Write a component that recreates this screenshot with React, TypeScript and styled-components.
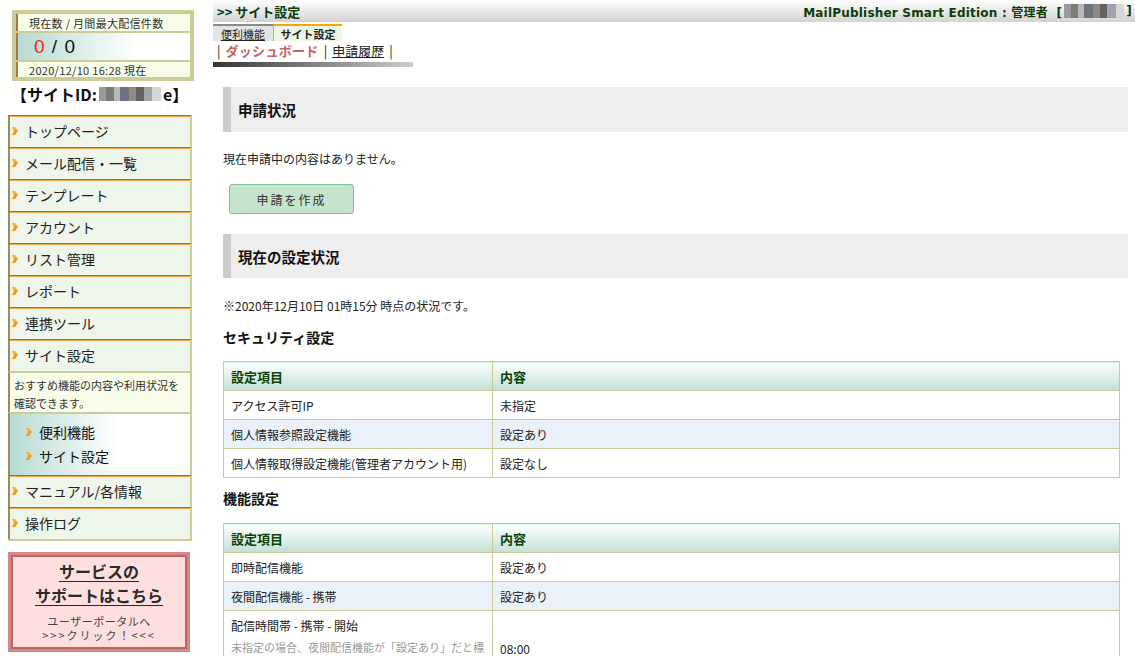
import React from 'react';
import styled, { createGlobalStyle } from 'styled-components';

const GlobalStyle = createGlobalStyle`
	html, body {
		margin: 0;
		padding: 0;
		background: #ffffff;
	}
	body {
		font-family: "Noto Sans CJK JP", "Noto Sans", "Liberation Sans", sans-serif;
		color: #222222;
	}
	* {
		box-sizing: border-box;
	}
`;

const Page = styled.div`
	display: flex;
	width: 1135px;
	height: 656px;
	overflow: hidden;
`;

/* ---------- sidebar ---------- */

const Sidebar = styled.div`
	width: 213px;
	flex: none;
	padding-left: 8px;
	padding-top: 10px;
`;

const StatusBox = styled.div`
	margin-left: 4px;
	width: 182px;
	border: 4px solid #cccc99;
	background: #cccc99;
	display: flex;
	flex-direction: column;
	gap: 2px;
`;

const StatusRow = styled.div<{ $h: number; $grad?: boolean }>`
	height: ${p => p.$h}px;
	border-left: 2px solid #a37a45;
	background: ${p => (p.$grad ? 'linear-gradient(to right, #b6dbd3, #ffffff 70%)' : '#f8fde9')};
	display: flex;
	align-items: center;
	padding-left: ${p => (p.$grad ? 16 : 11)}px;
	font-size: 11px;
	color: #333;
	letter-spacing: 0.3px;
`;

const Count = styled.span`
	font-size: 19px;
	color: #111;
	font-family: "Liberation Sans", sans-serif;
	letter-spacing: 1px;
`;

const Zero = styled.span`
	color: #ff2222;
`;

const SiteId = styled.div`
	margin: 3px 0 0 3px;
	font-size: 16px;
	font-weight: bold;
	line-height: 20px;
	display: flex;
	align-items: center;
	color: #111;
`;

const Mosaic = styled.span<{ $w: number }>`
	display: inline-block;
	width: ${p => p.$w}px;
	height: 14px;
	background: linear-gradient(
		to right,
		#9a9a9a 0 12%,
		#7d7b78 12% 24%,
		#b8b8b8 24% 34%,
		#6f7480 34% 48%,
		#8e8a86 48% 60%,
		#67625f 60% 72%,
		#a0a4ac 72% 86%,
		#d6d6d6 86% 100%
	);
	margin: 0 2px;
`;

const Nav = styled.div`
	margin-top: 11px;
	width: 184px;
	border-bottom: 2px solid #cccc99;
`;

const NavItem = styled.div`
	height: 32px;
	border-top: 1px solid #857548;
	box-shadow: inset 0 1px 0 #f3a64a;
	border-left: 2px solid #9c8a5a;
	border-right: 2px solid #cccc99;
	background: #eef5ea;
	display: flex;
	align-items: center;
	padding: 0 0 2px 2px;
	font-size: 14px;
	color: #222;
`;

const Arrow = () => (
	<svg width="6" height="8" viewBox="0 0 6 8" style={{ flex: 'none', marginRight: 7 }}>
		<polygon points="0,0 3,0 6,4 3,8 0,8 2,4" fill="#f39a1e" />
		<polygon points="0,0 3,0 5,3 2,3" fill="#f8b850" />
	</svg>
);

const NavNote = styled.div`
	border-top: 2px solid #cccc99;
	border-left: 2px solid #9c8a5a;
	border-right: 2px solid #cccc99;
	background: #f8fde9;
	font-size: 11px;
	line-height: 18px;
	padding: 3px 4px 2px;
	height: 41px;
	color: #333;
`;

const SubNav = styled.div`
	border-top: 2px solid #cccc99;
	border-left: 2px solid #9c8a5a;
	border-right: 2px solid #cccc99;
	background: linear-gradient(to right, #b6dbd3, #ffffff 60%);
	height: 63px;
	padding: 6px 0 0 16px;
`;

const SubNavItem = styled.div`
	display: flex;
	align-items: center;
	height: 24px;
	font-size: 14px;
	color: #111;
`;

const Support = styled.div`
	margin-top: 11px;
	width: 182px;
	height: 100px;
	background: #fddfe0;
	border: 3px solid #d98585;
	box-shadow: inset 0 0 0 2px #b66a6a;
	display: flex;
	flex-direction: column;
	align-items: center;
	padding-top: 4px;
	color: #333;
`;

const SupportTitle = styled.div`
	font-size: 16px;
	font-weight: bold;
	line-height: 24px;
	text-decoration: underline;
	text-underline-offset: 3px;
	color: #2a2a2a;
`;

const SupportSub = styled.div<{ $spaced?: boolean }>`
	font-size: 11px;
	line-height: 14px;
	color: #444;
	text-align: center;
	letter-spacing: ${p => (p.$spaced ? '2px' : '0.5px')};
	margin-top: ${p => (p.$spaced ? 0 : 7)}px;
`;

/* ---------- main ---------- */

const Main = styled.div`
	flex: 1;
	min-width: 0;
`;

const TopBar = styled.div`
	height: 22px;
	background: linear-gradient(to bottom, #ffffff, #d3d3d3);
	display: flex;
	align-items: center;
	justify-content: space-between;
	padding: 0 3px 0 4px;
	color: #0b3d0b;
	font-weight: bold;
`;

const PageTitle = styled.div`
	font-size: 13px;
`;

const UserInfo = styled.div`
	font-size: 12px;
	display: flex;
	align-items: center;
	font-family: "DejaVu Sans", "Noto Sans CJK JP", sans-serif;
	letter-spacing: 0.2px;
`;

const Tabs = styled.div`
	display: flex;
	margin-top: 2px;
`;

const Tab = styled.div<{ $active?: boolean }>`
	height: 17px;
	width: ${p => (p.$active ? 69 : 60)}px;
	background: ${p => (p.$active ? '#eaf8e4' : '#e4e4e4')};
	border-top: 2px solid ${p => (p.$active ? '#f3aa00' : '#8a8a8a')};
	border-left: ${p => (p.$active ? '1px solid #f3aa00' : 'none')};
	font-size: 11px;
	font-weight: ${p => (p.$active ? 'bold' : 'normal')};
	text-decoration: ${p => (p.$active ? 'none' : 'underline')};
	display: flex;
	align-items: center;
	justify-content: center;
	color: #222;
`;

const LinkRow = styled.div`
	margin-top: 1px;
	padding-left: 4px;
	font-size: 13px;
	line-height: 18px;
	color: #222;
	display: flex;
	gap: 5px;
`;

const CurrentLink = styled.span`
	color: #c86464;
	font-weight: bold;
	letter-spacing: 0.3px;
`;

const Link = styled.span`
	text-decoration: underline;
`;

const FadeBar = styled.div`
	width: 200px;
	height: 5px;
	margin-top: 2px;
	background: linear-gradient(to right, #353535, #cdcdcd);
`;

const Content = styled.div`
	padding: 20px 7px 0 10px;
`;

const SectionHead = styled.div<{ $h: number }>`
	height: ${p => p.$h}px;
	background: #eeeeee;
	border-left: 8px solid #cccccc;
	display: flex;
	align-items: center;
	padding-left: 7px;
	font-size: 14.5px;
	font-weight: bold;
	color: #111;
`;

const Para = styled.div<{ $mt: number }>`
	margin-top: ${p => p.$mt}px;
	font-size: 12px;
	line-height: 18px;
`;

const CreateButton = styled.button`
	margin: 16px 0 0 6px;
	width: 125px;
	height: 30px;
	background: #c4e4cd;
	border: 1px solid #7fc08f;
	border-radius: 3px;
	font-family: inherit;
	font-size: 12px;
	letter-spacing: 2px;
	color: #333;
	display: block;
`;

const Spacer = styled.div<{ $h: number }>`
	height: ${p => p.$h}px;
`;

const SubHead = styled.div<{ $mt: number }>`
	margin-top: ${p => p.$mt}px;
	font-size: 14px;
	font-weight: bold;
	line-height: 20px;
	color: #111;
`;

const Table = styled.table<{ $mt: number }>`
	margin-top: ${p => p.$mt}px;
	width: calc(100% - 8px);
	border-collapse: collapse;
	border: 1px solid #cccc99;
	font-size: 12px;
	color: #222;
`;

const Th = styled.th`
	height: 29px;
	background: linear-gradient(to bottom, #fbfffc, #c3e0d8);
	border: 1px solid #cccc99;
	text-align: left;
	padding: 0 7px;
	font-size: 13px;
	color: #0a420a;
	&:first-child {
		width: 269px;
	}
`;

const Tr = styled.tr<{ $alt?: boolean }>`
	background: ${p => (p.$alt ? '#eaf1f9' : '#ffffff')};
`;

const Td = styled.td<{ $tall?: boolean }>`
	height: 29px;
	border: 1px solid #cccc99;
	padding: ${p => (p.$tall ? '6px 7px 0' : '0 7px')};
	vertical-align: ${p => (p.$tall ? 'top' : 'middle')};
`;

const Hint = styled.div`
	font-size: 11px;
	line-height: 16px;
	color: #999999;
	margin-top: 5px;
`;

const LateValue = styled.div`
	padding-top: 23px;
`;

type Row = { name: string; value: string };

const securityRows: Row[] = [
	{ name: 'アクセス許可IP', value: '未指定' },
	{ name: '個人情報参照設定機能', value: '設定あり' },
	{ name: '個人情報取得設定機能(管理者アカウント用)', value: '設定なし' },
];

const featureRows: Row[] = [
	{ name: '即時配信機能', value: '設定あり' },
	{ name: '夜間配信機能 - 携帯', value: '設定あり' },
];

const navTop = ['トップページ', 'メール配信・一覧', 'テンプレート', 'アカウント', 'リスト管理', 'レポート', '連携ツール', 'サイト設定'];
const navBottom = ['マニュアル/各情報', '操作ログ'];

const App = () => {
	return (
		<>
			<GlobalStyle />
			<Page>
				<Sidebar>
					<StatusBox>
						<StatusRow $h={17}>現在数 / 月間最大配信件数</StatusRow>
						<StatusRow $h={27} $grad>
							<Count>
								<Zero>0</Zero> / 0
							</Count>
						</StatusRow>
						<StatusRow $h={15}>2020/12/10 16:28 現在</StatusRow>
					</StatusBox>
					<SiteId>
						【サイトID:<Mosaic $w={62} />e】
					</SiteId>

					<Nav>
						{navTop.map(label => (
							<NavItem key={label}>
								<Arrow />
								{label}
							</NavItem>
						))}
						<NavNote>
							おすすめ機能の内容や利用状況を
							<br />
							確認できます。
						</NavNote>
						<SubNav>
							<SubNavItem>
								<Arrow />
								便利機能
							</SubNavItem>
							<SubNavItem>
								<Arrow />
								サイト設定
							</SubNavItem>
						</SubNav>
						{navBottom.map(label => (
							<NavItem key={label}>
								<Arrow />
								{label}
							</NavItem>
						))}
					</Nav>

					<Support>
						<SupportTitle>サービスの</SupportTitle>
						<SupportTitle>サポートはこちら</SupportTitle>
						<SupportSub>ユーザーポータルへ</SupportSub>
						<SupportSub $spaced>&gt;&gt;&gt;クリック！&lt;&lt;&lt;</SupportSub>
					</Support>
				</Sidebar>

				<Main>
					<TopBar>
						<PageTitle>&gt;&gt; サイト設定</PageTitle>
						<UserInfo>
							MailPublisher Smart Edition : 管理者 &nbsp;[ <Mosaic $w={60} /> ]
						</UserInfo>
					</TopBar>
					<Tabs>
						<Tab>便利機能</Tab>
						<Tab $active>サイト設定</Tab>
					</Tabs>
					<LinkRow>
						<span>|</span>
						<CurrentLink>ダッシュボード</CurrentLink>
						<span>|</span>
						<Link>申請履歴</Link>
						<span>|</span>
					</LinkRow>
					<FadeBar />

					<Content>
						<SectionHead $h={45}>申請状況</SectionHead>
						<Para $mt={18}>現在申請中の内容はありません。</Para>
						<CreateButton>申請を作成</CreateButton>

						<Spacer $h={20} />
						<SectionHead $h={44}>現在の設定状況</SectionHead>
						<Para $mt={19}>※2020年12月10日 01時15分 時点の状況です。</Para>

						<SubHead $mt={12}>セキュリティ設定</SubHead>
						<Table $mt={14}>
							<thead>
								<tr>
									<Th>設定項目</Th>
									<Th>内容</Th>
								</tr>
							</thead>
							<tbody>
								{securityRows.map((r, i) => (
									<Tr key={r.name} $alt={i % 2 === 1}>
										<Td>{r.name}</Td>
										<Td>{r.value}</Td>
									</Tr>
								))}
							</tbody>
						</Table>

						<SubHead $mt={10}>機能設定</SubHead>
						<Table $mt={15}>
							<thead>
								<tr>
									<Th>設定項目</Th>
									<Th>内容</Th>
								</tr>
							</thead>
							<tbody>
								{featureRows.map((r, i) => (
									<Tr key={r.name} $alt={i % 2 === 1}>
										<Td>{r.name}</Td>
										<Td>{r.value}</Td>
									</Tr>
								))}
								<Tr>
									<Td $tall>
										配信時間帯 - 携帯 - 開始
										<Hint>未指定の場合、夜間配信機能が「設定あり」だと標準の配信時間帯が適用されます。</Hint>
									</Td>
									<Td $tall>
										<LateValue>08:00</LateValue>
									</Td>
								</Tr>
							</tbody>
						</Table>
					</Content>
				</Main>
			</Page>
		</>
	);
};

export default App;
